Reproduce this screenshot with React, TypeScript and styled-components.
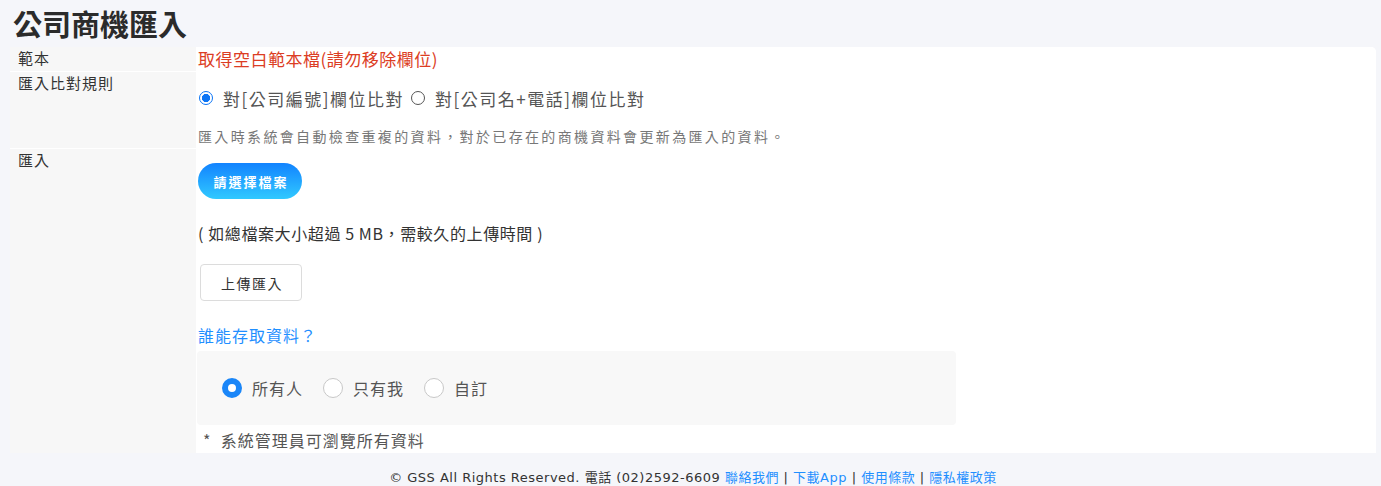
import React from "react";
import styled, { createGlobalStyle } from "styled-components";

const GlobalStyle = createGlobalStyle`
  html, body { margin: 0; padding: 0; }
  body {
    background: #f5f6fa;
    font-family: "Noto Sans CJK TC", "Noto Sans", sans-serif;
    color: #333;
  }
`;

const Page = styled.div`
  padding: 6px 5px 0 10px;
`;

const Title = styled.h1`
  margin: 0 0 0 3px;
  font-size: 29px;
  line-height: 35px;
  font-weight: 700;
  color: #2b2b2b;
`;

const Table = styled.div`
  margin-top: 6px;
  display: grid;
  grid-template-columns: 186px 1fr;
  grid-template-rows: 24px 76px 304px;
  row-gap: 1px;
  background: #fff;
  border-radius: 0 5px 0 0;
  overflow: hidden;
`;

const Label = styled.div`
  background: #f7f7f7;
  padding: 1px 0 0 8px;
  font-size: 15px;
  line-height: 20px;
  letter-spacing: 1px;
  color: #333;
`;

const Cell = styled.div<{ $pt?: number }>`
  background: #fff;
  padding: ${(p) => p.$pt ?? 0}px 8px 0 2px;
  display: flex;
  flex-direction: column;
  align-items: flex-start;
`;

const RedLink = styled.div`
  font-size: 17px;
  line-height: 24px;
  letter-spacing: 0.5px;
  color: #dc3d24;
`;

const RadioLine = styled.div`
  display: flex;
  align-items: center;
  height: 26px;
  margin-top: -1px;
`;

const SmallOption = styled.label<{ $first?: boolean }>`
  display: inline-flex;
  align-items: center;
  font-size: 17px;
  letter-spacing: 1.5px;
  color: #555;
  margin-left: ${(p) => (p.$first ? 1 : 7)}px;
`;

const SmallCircle = styled.span<{ $checked?: boolean }>`
  box-sizing: border-box;
  width: 14px;
  height: 14px;
  border-radius: 50%;
  margin-right: 10px;
  border: 1px solid ${(p) => (p.$checked ? "#0b74f5" : "#555")};
  background: ${(p) => (p.$checked ? "radial-gradient(circle, #0b74f5 0 3.8px, #fff 4.4px)" : "#fff")};
`;

const Desc = styled.div`
  margin-top: 15px;
  font-size: 14px;
  line-height: 20px;
  letter-spacing: 2.35px;
  color: #777;
`;

const FileButton = styled.button`
  width: 104px;
  height: 36px;
  border: none;
  border-radius: 18px;
  background: linear-gradient(180deg, #1283ff 0%, #31c9ff 100%);
  color: #fff;
  font-family: inherit;
  font-size: 13px;
  font-weight: 700;
  letter-spacing: 2px;
  padding: 0 0 0 2px;
  cursor: pointer;
`;

const Note = styled.div<{ $mt: number }>`
  margin-top: ${(p) => p.$mt}px;
  font-size: 16px;
  line-height: 22px;
  letter-spacing: 0.6px;
  color: #333;
`;

const UploadButton = styled.button`
  margin: 20px 0 0 2px;
  width: 102px;
  height: 37px;
  background: #fff;
  border: 1px solid #dcdcdc;
  border-radius: 4px;
  font-family: inherit;
  font-size: 14px;
  letter-spacing: 1.5px;
  padding: 0 0 0 2px;
  color: #333;
  cursor: pointer;
`;

const AccessLink = styled.div`
  margin-top: 23px;
  font-size: 16px;
  line-height: 22px;
  letter-spacing: 1px;
  color: #1f8fff;
`;

const AccessBox = styled.div`
  margin: 5px 0 0 -1px;
  width: 759px;
  height: 74px;
  box-sizing: border-box;
  background: #f8f8f8;
  border-radius: 4px;
  padding-left: 25px;
  display: flex;
  align-items: center;
  gap: 20px;
`;

const BigOption = styled.label`
  display: inline-flex;
  align-items: center;
  gap: 10px;
  font-size: 16px;
  letter-spacing: 1px;
  color: #555;
`;

const BigCircle = styled.span<{ $checked?: boolean }>`
  box-sizing: border-box;
  width: 20px;
  height: 20px;
  border-radius: 50%;
  background: #fff;
  border: ${(p) => (p.$checked ? "6px solid #1a86f8" : "1px solid #c8c8c8")};
`;

const AdminNote = styled.div`
  margin: 4px 0 0 5px;
  font-size: 16px;
  line-height: 22px;
  letter-spacing: 1px;
  color: #555;
  white-space: pre;
`;

const Footer = styled.footer`
  padding: 16px 0 0;
  text-align: center;
  font-family: "DejaVu Sans", "Noto Sans CJK TC", sans-serif;
  font-size: 13px;
  line-height: 18px;
  letter-spacing: 0.5px;
  color: #333;
`;

const FootLink = styled.a`
  color: #1f8fff;
  text-decoration: none;
`;

export default function App() {
  return (
    <>
      <GlobalStyle />
      <Page>
        <Title>公司商機匯入</Title>
        <Table>
          <Label>範本</Label>
          <Cell>
            <RedLink>取得空白範本檔(請勿移除欄位)</RedLink>
          </Cell>

          <Label>匯入比對規則</Label>
          <Cell $pt={14}>
            <RadioLine>
              <SmallOption $first>
                <SmallCircle $checked />
                對[公司編號]欄位比對
              </SmallOption>
              <SmallOption>
                <SmallCircle />
                對[公司名+電話]欄位比對
              </SmallOption>
            </RadioLine>
            <Desc>匯入時系統會自動檢查重複的資料，對於已存在的商機資料會更新為匯入的資料。</Desc>
          </Cell>

          <Label>匯入</Label>
          <Cell $pt={14}>
            <FileButton>請選擇檔案</FileButton>
            <Note $mt={23}>( 如總檔案大小超過 5 MB，需較久的上傳時間 )</Note>
            <UploadButton>上傳匯入</UploadButton>
            <AccessLink>誰能存取資料？</AccessLink>
            <AccessBox>
              <BigOption>
                <BigCircle $checked />
                所有人
              </BigOption>
              <BigOption>
                <BigCircle />
                只有我
              </BigOption>
              <BigOption>
                <BigCircle />
                自訂
              </BigOption>
            </AccessBox>
            <AdminNote>{"*  系統管理員可瀏覽所有資料"}</AdminNote>
          </Cell>
        </Table>
        <Footer>
          © GSS All Rights Reserved. 電話 (02)2592-6609 <FootLink>聯絡我們</FootLink> | <FootLink>下載App</FootLink> |{" "}
          <FootLink>使用條款</FootLink> | <FootLink>隱私權政策</FootLink>
        </Footer>
      </Page>
    </>
  );
}
